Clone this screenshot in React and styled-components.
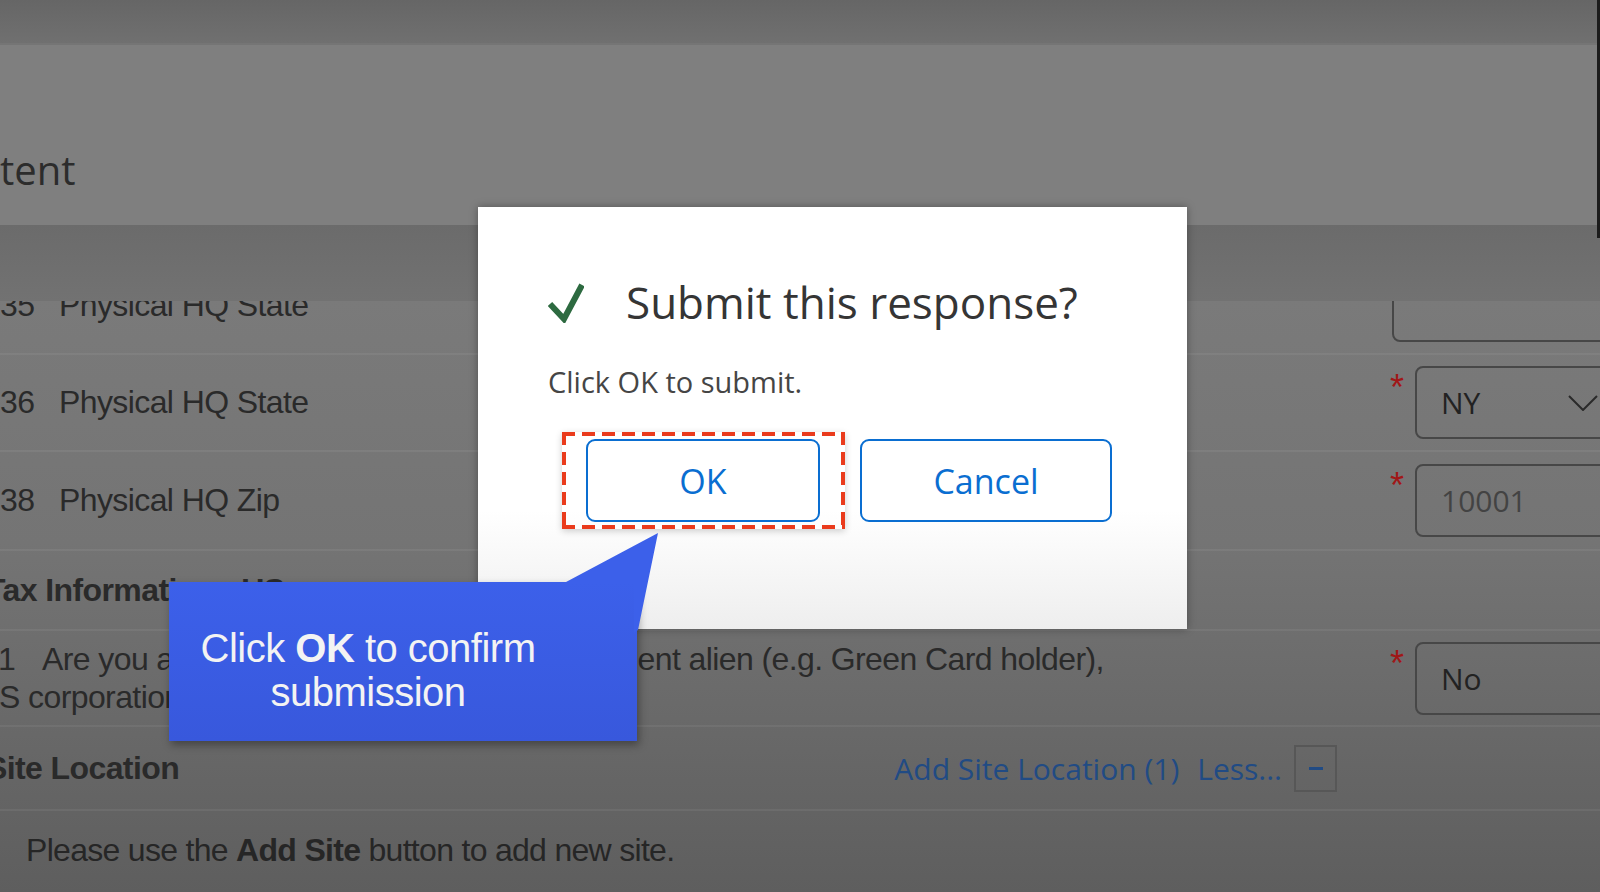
import React from 'react';
import styled, { createGlobalStyle } from 'styled-components';

const GlobalStyle = createGlobalStyle`
  html, body {
    margin: 0;
    padding: 0;
  }
  body {
    width: 1600px;
    height: 892px;
    overflow: hidden;
    background: #6d6d6d;
  }
  * {
    box-sizing: border-box;
  }
`;

const Page = styled.div`
  position: relative;
  width: 1600px;
  height: 892px;
  overflow: hidden;
  display: flex;
  flex-direction: column;
  font-family: "Liberation Sans", Arial, sans-serif;
  background: #7a7a7a;
`;

const TopStrip = styled.div`
  flex: none;
  height: 45px;
  background: linear-gradient(#666666, #707070);
  border-bottom: 2px solid #757575;
`;

const TitleArea = styled.div`
  flex: none;
  height: 180px;
  display: flex;
  align-items: flex-end;
  padding-bottom: 28px;
  background: #7f7f7f;
  font-family: "Open Sans", sans-serif;
  font-size: 40px;
  line-height: 54px;
  color: #2c2c2c;
`;

const StickyBand = styled.div`
  position: relative;
  z-index: 2;
  flex: none;
  height: 76px;
  background: linear-gradient(#6b6b6b, #727272);
`;

const Rows = styled.div`
  flex: 1;
  margin-top: -43px;
  display: flex;
  flex-direction: column;
  background: linear-gradient(#7b7b7b 0%, #747474 45%, #5e5e5e 100%);
`;

const Row = styled.div`
  flex: none;
  height: ${p => p.$h}px;
  display: grid;
  grid-template-columns: 1390px 1fr;
  align-items: center;
  border-bottom: 2px solid rgba(255, 255, 255, 0.06);
`;

const LabelCell = styled.div`
  display: flex;
  align-items: baseline;
  white-space: nowrap;
  font-size: 32px;
  letter-spacing: -0.6px;
  color: #2a2a2a;
`;

const Num = styled.span`
  flex: none;
  width: ${p => p.$w}px;
`;

const QuestionText = styled.div`
  white-space: nowrap;
  font-size: 32px;
  line-height: 38px;
  letter-spacing: -0.6px;
  color: #2a2a2a;
`;

const QuestionLine = styled.div`
  display: flex;
  margin-left: ${p => p.$shift || 0}px;
`;

const SectionTitle = styled.div`
  margin-left: -14px;
  white-space: nowrap;
  font-size: 32px;
  font-weight: 700;
  letter-spacing: -0.6px;
  color: #2a2a2a;
`;

const FieldCell = styled.div`
  display: flex;
  align-items: flex-start;
  padding-left: ${p => p.$pad || 0}px;
`;

const Asterisk = styled.span`
  flex: none;
  width: 25px;
  margin-top: 4px;
  font-size: 36px;
  line-height: 1;
  color: #a01717;
`;

const Field = styled.div`
  flex: none;
  width: 220px;
  height: 73px;
  display: flex;
  align-items: center;
  justify-content: space-between;
  padding: 0 35px 0 24px;
  border: 2px solid #474747;
  border-radius: 8px;
  font-family: "Open Sans", sans-serif;
  font-size: 30px;
  color: ${p => (p.$muted ? '#434343' : '#222222')};
`;

const SiteRow = styled.div`
  flex: none;
  height: 84px;
  display: flex;
  align-items: center;
  padding-right: 263px;
  border-bottom: 2px solid rgba(255, 255, 255, 0.06);
`;

const LinkGroup = styled.div`
  margin-left: auto;
  display: flex;
  align-items: center;
  font-family: "Open Sans", sans-serif;
  font-size: 30px;
  color: #214b84;
`;

const LessLink = styled.span`
  margin-left: 18px;
`;

const CollapseBox = styled.div`
  width: 43px;
  height: 47px;
  margin-left: 12px;
  display: flex;
  align-items: center;
  justify-content: center;
  border: 2px solid #575757;
`;

const Dash = styled.span`
  width: 14px;
  height: 3px;
  background: #214b84;
`;

const NoteRow = styled.div`
  flex: 1;
  display: flex;
  align-items: center;
  padding-left: 26px;
  padding-bottom: 2px;
  white-space: nowrap;
  font-size: 32px;
  letter-spacing: -0.7px;
  color: #262626;

  b {
    font-weight: 700;
  }
`;

const EdgeBar = styled.div`
  position: absolute;
  z-index: 7;
  top: 0;
  right: 0;
  width: 3px;
  height: 238px;
  background: #1c1c1c;
`;

/* modal */

const Dialog = styled.div`
  position: absolute;
  z-index: 5;
  left: 478px;
  top: 207px;
  width: 709px;
  height: 422px;
  padding: 69px 0 0 70px;
  background: linear-gradient(#ffffff 0%, #ffffff 72%, #eeeeee 100%);
  box-shadow: 0 0 8px rgba(0, 0, 0, 0.35);
  font-family: "Open Sans", sans-serif;
`;

const TitleRow = styled.div`
  display: flex;
  align-items: center;
  height: 53px;
`;

const Title = styled.div`
  margin-left: 42px;
  font-size: 44px;
  line-height: 53px;
  color: #353535;
  white-space: nowrap;
`;

const Message = styled.div`
  margin-top: 33px;
  font-size: 29px;
  line-height: 40px;
  color: #454545;
`;

const ButtonRow = styled.div`
  display: flex;
  align-items: center;
  margin: 30px 0 0 14px;
`;

const dashH = 'repeating-linear-gradient(90deg, #ea3b1c 0 13px, transparent 13px 20px)';
const dashV = 'repeating-linear-gradient(180deg, #ea3b1c 0 13px, transparent 13px 20px)';

const Highlight = styled.div`
  padding: 7px 25px 7px 24px;
  background:
    ${dashH} left top / 100% 4px no-repeat,
    ${dashH} left bottom / 100% 4px no-repeat,
    ${dashV} left top / 4px 100% no-repeat,
    ${dashV} right top / 4px 100% no-repeat;
  box-shadow: 0 2px 7px rgba(0, 0, 0, 0.2);
`;

const Button = styled.button`
  width: ${p => p.$w}px;
  height: 83px;
  margin-left: ${p => p.$gap || 0}px;
  display: flex;
  align-items: center;
  justify-content: center;
  background: #ffffff;
  border: 2px solid #0a6ed1;
  border-radius: 9px;
  font-family: "Open Sans", sans-serif;
  font-size: 34px;
  color: #0a6ed1;
  padding: 0;
`;

/* tutorial callout */

const Callout = styled.div`
  position: absolute;
  z-index: 6;
  left: 169px;
  top: 582px;
  width: 468px;
  height: 159px;
  display: flex;
  align-items: center;
  justify-content: center;
  padding: 17px 100px 0 30px;
  background: linear-gradient(#3c60ea, #3858dc);
  box-shadow: 2px 4px 8px rgba(0, 0, 0, 0.35);
  text-align: center;
  font-size: 40px;
  line-height: 44px;
  letter-spacing: -0.5px;
  color: #f3f3f3;

  &::before {
    content: "";
    position: absolute;
    left: 397px;
    top: -49px;
    width: 92px;
    height: 100px;
    background: #3c60ea;
    clip-path: polygon(0 49px, 92px 0, 72px 97px, 68px 100px, 68px 49px);
  }

  b {
    font-weight: 700;
  }
`;

const CalloutText = styled.div`
  position: relative;
`;

const CheckIcon = () => (
  <svg width="36" height="40" viewBox="0 0 36 40">
    <polyline
      points="2,21 16,36 34,2"
      fill="none"
      stroke="#2d6a40"
      strokeWidth="6"
      strokeLinejoin="miter"
    />
  </svg>
);

const Chevron = () => (
  <svg width="30" height="16" viewBox="0 0 30 16">
    <polyline points="1,1 15,15 29,1" fill="none" stroke="#2a2a2a" strokeWidth="2" />
  </svg>
);

const FormRow = ({ h, num, label, required, field, muted, chevron, pad }) => (
  <Row $h={h}>
    <LabelCell>
      <Num $w={59}>{num}</Num>
      <span>{label}</span>
    </LabelCell>
    <FieldCell $pad={pad}>
      {required && <Asterisk>*</Asterisk>}
      <Field $muted={muted}>
        <span>{field}</span>
        {chevron && <Chevron />}
      </Field>
    </FieldCell>
  </Row>
);

export default function App() {
  return (
    <>
      <GlobalStyle />
      <Page>
        <TopStrip />
        <TitleArea>tent</TitleArea>
        <StickyBand />
        <Rows>
          <FormRow h={97} num="35" label="Physical HQ State" field="" pad={2} />
          <FormRow h={97} num="36" label="Physical HQ State" field="NY" required chevron />
          <FormRow h={99} num="38" label="Physical HQ Zip" field="10001" required muted />
          <Row $h={80}>
            <SectionTitle>Tax Information - US</SectionTitle>
          </Row>
          <Row $h={96}>
            <QuestionText>
              <QuestionLine $shift={-2}>
                <Num $w={44}>1</Num>
                <span>Are you a US citizen or US permanent resident alien (e.g. Green Card holder),</span>
              </QuestionLine>
              <QuestionLine $shift={-1}>S corporation</QuestionLine>
            </QuestionText>
            <FieldCell>
              <Asterisk>*</Asterisk>
              <Field>
                <span>No</span>
              </Field>
            </FieldCell>
          </Row>
          <SiteRow>
            <SectionTitle>Site Location</SectionTitle>
            <LinkGroup>
              <span>Add Site Location (1)</span>
              <LessLink>Less...</LessLink>
              <CollapseBox>
                <Dash />
              </CollapseBox>
            </LinkGroup>
          </SiteRow>
          <NoteRow>
            <span>
              Please use the <b>Add Site</b> button to add new site.
            </span>
          </NoteRow>
        </Rows>

        <Dialog>
          <TitleRow>
            <CheckIcon />
            <Title>Submit this response?</Title>
          </TitleRow>
          <Message>Click OK to submit.</Message>
          <ButtonRow>
            <Highlight>
              <Button $w={234}>OK</Button>
            </Highlight>
            <Button $w={252} $gap={15}>Cancel</Button>
          </ButtonRow>
        </Dialog>

        <Callout>
          <CalloutText>
            Click <b>OK</b> to confirm
            <br />
            submission
          </CalloutText>
        </Callout>

        <EdgeBar />
      </Page>
    </>
  );
}
